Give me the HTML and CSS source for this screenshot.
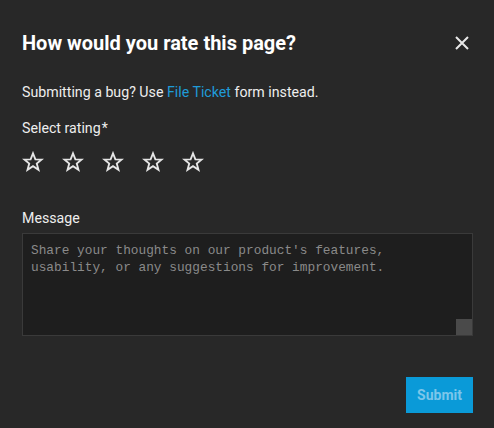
FILE: index.html
```html
<!DOCTYPE html>
<html>
<head>
<meta charset="utf-8">
<link rel="stylesheet" href="styles.css">
</head>
<body>
<div class="modal">
  <div class="header">
    <h1 class="title">How would you rate this page?</h1>
    <button class="close" aria-label="Close">
      <svg width="16" height="16" viewBox="0 0 16 16"><path d="M2 2 L14 14 M14 2 L2 14" stroke="#e8e8e8" stroke-width="2" fill="none"/></svg>
    </button>
  </div>
  <p class="note">Submitting a bug? Use <a class="link" href="#">File Ticket</a> form instead.</p>
  <div class="label">Select rating<span class="req">*</span></div>
  <div class="stars">
    <svg class="star" viewBox="0 0 24 24"><path d="M12 2.5 L14.6 9.1 L21.5 9.3 L16.1 13.6 L18 20.5 L12 16.5 L6 20.5 L7.9 13.6 L2.5 9.3 L9.4 9.1 Z"/></svg>
    <svg class="star" viewBox="0 0 24 24"><path d="M12 2.5 L14.6 9.1 L21.5 9.3 L16.1 13.6 L18 20.5 L12 16.5 L6 20.5 L7.9 13.6 L2.5 9.3 L9.4 9.1 Z"/></svg>
    <svg class="star" viewBox="0 0 24 24"><path d="M12 2.5 L14.6 9.1 L21.5 9.3 L16.1 13.6 L18 20.5 L12 16.5 L6 20.5 L7.9 13.6 L2.5 9.3 L9.4 9.1 Z"/></svg>
    <svg class="star" viewBox="0 0 24 24"><path d="M12 2.5 L14.6 9.1 L21.5 9.3 L16.1 13.6 L18 20.5 L12 16.5 L6 20.5 L7.9 13.6 L2.5 9.3 L9.4 9.1 Z"/></svg>
    <svg class="star" viewBox="0 0 24 24"><path d="M12 2.5 L14.6 9.1 L21.5 9.3 L16.1 13.6 L18 20.5 L12 16.5 L6 20.5 L7.9 13.6 L2.5 9.3 L9.4 9.1 Z"/></svg>
  </div>
  <div class="label msg-label">Message</div>
  <div class="textarea-wrap">
    <textarea class="textarea" placeholder="Share your thoughts on our product's features, usability, or any suggestions for improvement."></textarea>
    <span class="grip"></span>
  </div>
  <div class="footer">
    <button class="submit" disabled>Submit</button>
  </div>
</div>
</body>
</html>
```
FILE: styles.css
```css
html, body {
  margin: 0;
  padding: 0;
  background: #282828;
  width: 494px;
  height: 428px;
  overflow: hidden;
}
.modal {
  padding: 22px 21px 0 22px;
  color: #f0f0f0;
  font-family: Roboto, "Noto Sans", sans-serif;
}
.header {
  display: flex;
  justify-content: space-between;
  align-items: center;
  height: 42px;
}
.title {
  margin: 0;
  font-size: 20px;
  font-weight: 700;
  color: #ffffff;
}
.close {
  background: none;
  border: 0;
  padding: 0;
  margin-right: 3px;
  width: 16px;
  height: 16px;
  display: flex;
}
.note {
  margin: 18px 0 0 0;
  font-size: 14.2px;
  line-height: 20px;
  color: #eeeeee;
}
.link {
  color: #1f9bd8;
  text-decoration: none;
}
.label {
  margin-top: 16px;
  font-size: 14.2px;
  line-height: 20px;
  color: #eeeeee;
}
.req { margin-left: 1px; }
.stars {
  display: flex;
  gap: 18px;
  margin-top: 13px;
  height: 22px;
}
.star {
  width: 22px;
  height: 22px;
  fill: none;
  stroke: #e6e6e6;
  stroke-width: 2;
  stroke-linejoin: miter;
}
.msg-label {
  margin-top: 35px;
}
.textarea-wrap {
  position: relative;
  margin-top: 5px;
  height: 103px;
}
.textarea {
  box-sizing: border-box;
  width: 100%;
  height: 103px;
  resize: none;
  background: #1e1e1e;
  border: 1px solid #3a3a3a;
  padding: 8px 8px;
  font-family: "Liberation Mono", "DejaVu Sans Mono", monospace;
  font-size: 12.8px;
  line-height: 17px;
  color: #ddd;
  outline: none;
  display: block;
}
.textarea::placeholder {
  color: #8a8a8a;
}
.grip {
  position: absolute;
  right: 1px;
  bottom: 1px;
  width: 16px;
  height: 16px;
  background: #4a4a4a;
}
.footer {
  display: flex;
  justify-content: flex-end;
  margin-top: 41px;
}
.submit {
  width: 67px;
  height: 36px;
  border: 0;
  background: #0a9ad8;
  color: #7cc6ea;
  font-family: Roboto, sans-serif;
  font-weight: 700;
  font-size: 14px;
  padding: 0;
}
```
